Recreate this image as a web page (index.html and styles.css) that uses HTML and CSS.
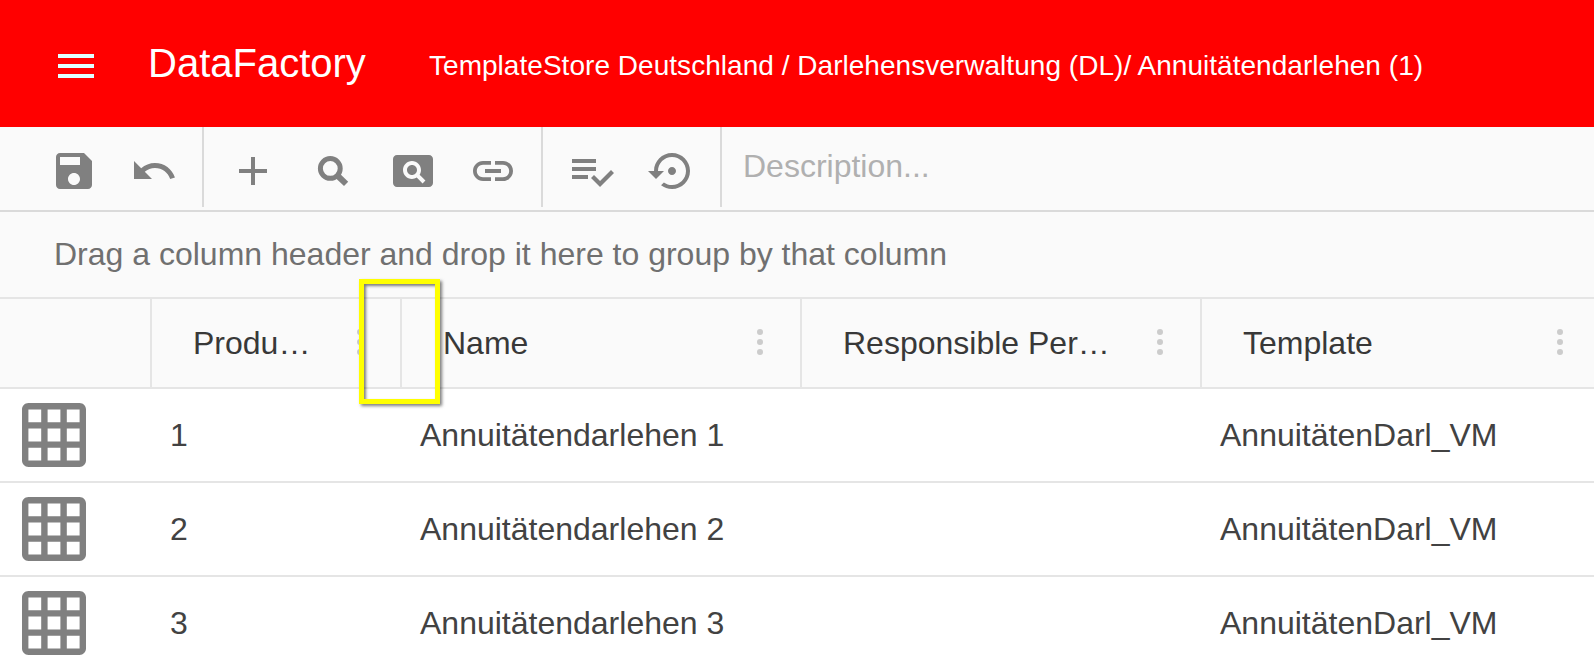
FILE: index.html
```html
<!DOCTYPE html>
<html lang="de">
<head>
<meta charset="utf-8">
<title>DataFactory</title>
<link rel="stylesheet" href="styles.css">
</head>
<body>
<header class="topbar">
  <svg class="menu" viewBox="0 0 24 24"><path d="M3 18h18v-2H3v2zm0-5h18v-2H3v2zm0-7v2h18V6H3z"/></svg>
  <h1 class="brand">DataFactory</h1>
  <div class="crumbs">TemplateStore Deutschland / Darlehensverwaltung (DL)/ Annuitätendarlehen (1)</div>
</header>
<div class="toolbar">
  <div class="tools tools-file">
    <svg class="icon" viewBox="0 0 24 24"><path d="M17 3H5c-1.11 0-2 .9-2 2v14c0 1.1.89 2 2 2h14c1.1 0 2-.9 2-2V7l-4-4zm-5 16c-1.66 0-3-1.34-3-3s1.34-3 3-3 3 1.34 3 3-1.34 3-3 3zm3-10H5V5h10v4z"/></svg>
    <svg class="icon" viewBox="0 0 24 24"><path d="M12.5 8c-2.65 0-5.05.99-6.9 2.6L2 7v9h9l-3.62-3.62c1.39-1.16 3.16-1.88 5.12-1.88 3.54 0 6.55 2.31 7.6 5.5l2.37-.78C21.08 11.03 17.15 8 12.5 8z"/></svg>
  </div>
  <div class="tools tools-edit">
    <svg class="icon" viewBox="0 0 24 24"><path d="M19 13h-6v6h-2v-6H5v-2h6V5h2v6h6v2z"/></svg>
    <svg class="icon" viewBox="0 0 48 48"><circle cx="21.3" cy="21.4" r="9.9" fill="none" stroke="#808080" stroke-width="5"/><path d="M27 31.2L31.2 27L39.2 34.8L35 39L27.6 32Z"/></svg>
    <svg class="icon" viewBox="0 0 24 24"><path d="M11.5 9C10.12 9 9 10.12 9 11.5s1.12 2.5 2.5 2.5 2.5-1.12 2.5-2.5S12.88 9 11.5 9zM20 4H4c-1.1 0-2 .9-2 2v12c0 1.1.9 2 2 2h16c1.1 0 2-.9 2-2V6c0-1.1-.9-2-2-2zm-3.21 14.21l-2.91-2.91c-.69.44-1.51.7-2.39.7C9.01 16 7 13.99 7 11.5S9.01 7 11.49 7 16 9.01 16 11.5c0 .88-.26 1.69-.7 2.39l2.91 2.9-1.42 1.42z"/></svg>
    <svg class="icon" viewBox="0 0 24 24"><path d="M3.9 12c0-1.71 1.39-3.1 3.1-3.1h4V7H7c-2.76 0-5 2.24-5 5s2.24 5 5 5h4v-1.9H7c-1.71 0-3.1-1.39-3.1-3.1zM8 13h8v-2H8v2zm9-6h-4v1.9h4c1.71 0 3.1 1.39 3.1 3.1s-1.39 3.1-3.1 3.1h-4V17h4c2.76 0 5-2.24 5-5s-2.24-5-5-5z"/></svg>
  </div>
  <div class="tools tools-check">
    <svg class="icon" viewBox="0 0 24 24"><path d="M14 10H2v2h12v-2zm0-4H2v2h12V6zM2 16h8v-2H2v2zm19.5-4.5L23 13l-6.99 7-4.51-4.5L13 14l3.01 3 5.49-5.5z"/></svg>
    <svg class="icon" viewBox="0 0 24 24"><path d="M14 12c0-1.1-.9-2-2-2s-2 .9-2 2 .9 2 2 2 2-.9 2-2zm-2-9c-4.97 0-9 4.03-9 9H0l4 4 4-4H5c0-3.87 3.13-7 7-7s7 3.13 7 7-3.13 7-7 7c-1.51 0-2.91-.49-4.06-1.3l-1.42 1.44C8.04 20.3 9.94 21 12 21c4.97 0 9-4.03 9-9s-4.03-9-9-9z"/></svg>
  </div>
  <div class="description">Description...</div>
</div>
<div class="grouping">Drag a column header and drop it here to group by that column</div>
<main class="grid">
  <div class="row head">
    <div class="th"></div>
    <div class="th"><span class="label">Produ…</span><svg class="dots" viewBox="0 0 6 26"><circle cx="3" cy="3" r="3"/><circle cx="3" cy="13" r="3"/><circle cx="3" cy="23" r="3"/></svg></div>
    <div class="th"><span class="label">Name</span><svg class="dots" viewBox="0 0 6 26"><circle cx="3" cy="3" r="3"/><circle cx="3" cy="13" r="3"/><circle cx="3" cy="23" r="3"/></svg></div>
    <div class="th"><span class="label">Responsible Per…</span><svg class="dots" viewBox="0 0 6 26"><circle cx="3" cy="3" r="3"/><circle cx="3" cy="13" r="3"/><circle cx="3" cy="23" r="3"/></svg></div>
    <div class="th"><span class="label">Template</span><svg class="dots" viewBox="0 0 6 26"><circle cx="3" cy="3" r="3"/><circle cx="3" cy="13" r="3"/><circle cx="3" cy="23" r="3"/></svg></div>
    <div class="marker"></div>
  </div>
  <div class="row">
    <div class="td-icon"><svg class="table-icon" viewBox="2 2 20 20"><path d="M20 2H4c-1.1 0-2 .9-2 2v16c0 1.1.9 2 2 2h16c1.1 0 2-.9 2-2V4c0-1.1-.9-2-2-2zM8 20H4v-4h4v4zm0-6H4v-4h4v4zm0-6H4V4h4v4zm6 12h-4v-4h4v4zm0-6h-4v-4h4v4zm0-6h-4V4h4v4zm6 12h-4v-4h4v4zm0-6h-4v-4h4v4zm0-6h-4V4h4v4z"/></svg></div>
    <div class="td">1</div><div class="td">Annuitätendarlehen 1</div><div class="td"></div><div class="td">AnnuitätenDarl_VM</div>
  </div>
  <div class="row">
    <div class="td-icon"><svg class="table-icon" viewBox="2 2 20 20"><path d="M20 2H4c-1.1 0-2 .9-2 2v16c0 1.1.9 2 2 2h16c1.1 0 2-.9 2-2V4c0-1.1-.9-2-2-2zM8 20H4v-4h4v4zm0-6H4v-4h4v4zm0-6H4V4h4v4zm6 12h-4v-4h4v4zm0-6h-4v-4h4v4zm0-6h-4V4h4v4zm6 12h-4v-4h4v4zm0-6h-4v-4h4v4zm0-6h-4V4h4v4z"/></svg></div>
    <div class="td">2</div><div class="td">Annuitätendarlehen 2</div><div class="td"></div><div class="td">AnnuitätenDarl_VM</div>
  </div>
  <div class="row">
    <div class="td-icon"><svg class="table-icon" viewBox="2 2 20 20"><path d="M20 2H4c-1.1 0-2 .9-2 2v16c0 1.1.9 2 2 2h16c1.1 0 2-.9 2-2V4c0-1.1-.9-2-2-2zM8 20H4v-4h4v4zm0-6H4v-4h4v4zm0-6H4V4h4v4zm6 12h-4v-4h4v4zm0-6h-4v-4h4v4zm0-6h-4V4h4v4zm6 12h-4v-4h4v4zm0-6h-4v-4h4v4zm0-6h-4V4h4v4z"/></svg></div>
    <div class="td">3</div><div class="td">Annuitätendarlehen 3</div><div class="td"></div><div class="td">AnnuitätenDarl_VM</div>
  </div>
</main>
</body>
</html>
```
FILE: styles.css
```css
* { box-sizing: border-box; }
html, body { height: 100%; }
body {
  margin: 0;
  overflow: hidden;
  background: #fff;
  color: #424242;
  font: 32px/36px "Liberation Sans", Arial, sans-serif;
  white-space: nowrap;
}
svg { display: block; flex: none; }
.topbar {
  display: flex;
  height: 127px;
  padding-left: 52px;
  background: #f00;
  color: #fff;
}
.menu { width: 48px; height: 48px; margin-top: 42px; fill: #e0ffff; }
.brand {
  width: 281px;
  margin: 40px 0 0 48px;
  font-size: 40px;
  line-height: 46px;
  font-weight: 400;
}
.crumbs {
  margin-top: 50px;
  font-size: 28px;
  line-height: 32px;
  letter-spacing: .035px;
}
.toolbar {
  display: flex;
  align-items: flex-start;
  height: 85px;
  background: #fafafa;
  border-bottom: 2px solid #dadada;
}
.tools {
  display: flex;
  gap: 32px;
  height: 80px;
  padding-top: 20px;
  border-right: 2px solid #dadada;
}
.tools-file { width: 204px; padding-left: 50px; }
.tools-edit { width: 339px; padding-left: 25px; }
.tools-check { width: 179px; padding-left: 25px; }
.icon { width: 48px; height: 48px; fill: #808080; }
.description { padding: 21px 0 0 21px; color: #b0b0b0; }
.grouping {
  height: 87px;
  padding: 24px 0 0 54px;
  background: #fafafa;
  border-bottom: 2px solid #e5e5e5;
  color: #707070;
}
.row {
  display: grid;
  grid-template-columns: 150px 250px 400px 400px 400px;
  height: 94px;
  border-bottom: 2px solid #e5e5e5;
}
.head {
  position: relative;
  height: 90px;
  background: #fafafa;
  color: #383838;
}
.th {
  display: flex;
  justify-content: space-between;
  padding: 26px 37px 0 41px;
  border-left: 2px solid #e5e5e5;
}
.th:first-child { border-left: 0; }
.dots { width: 6px; height: 26px; margin-top: 4px; fill: #ccc; }
.td-icon { padding: 14px 0 0 22px; }
.table-icon { width: 64px; height: 64px; fill: #808080; }
.td { padding: 28px 20px 0; }
.marker {
  position: absolute;
  left: 359px;
  top: -20px;
  width: 81px;
  height: 125px;
  border: 5px solid #ff0;
  box-shadow: 2px 2px 3px rgba(0, 0, 0, .5), inset 2px 2px 3px rgba(0, 0, 0, .5);
}
```
